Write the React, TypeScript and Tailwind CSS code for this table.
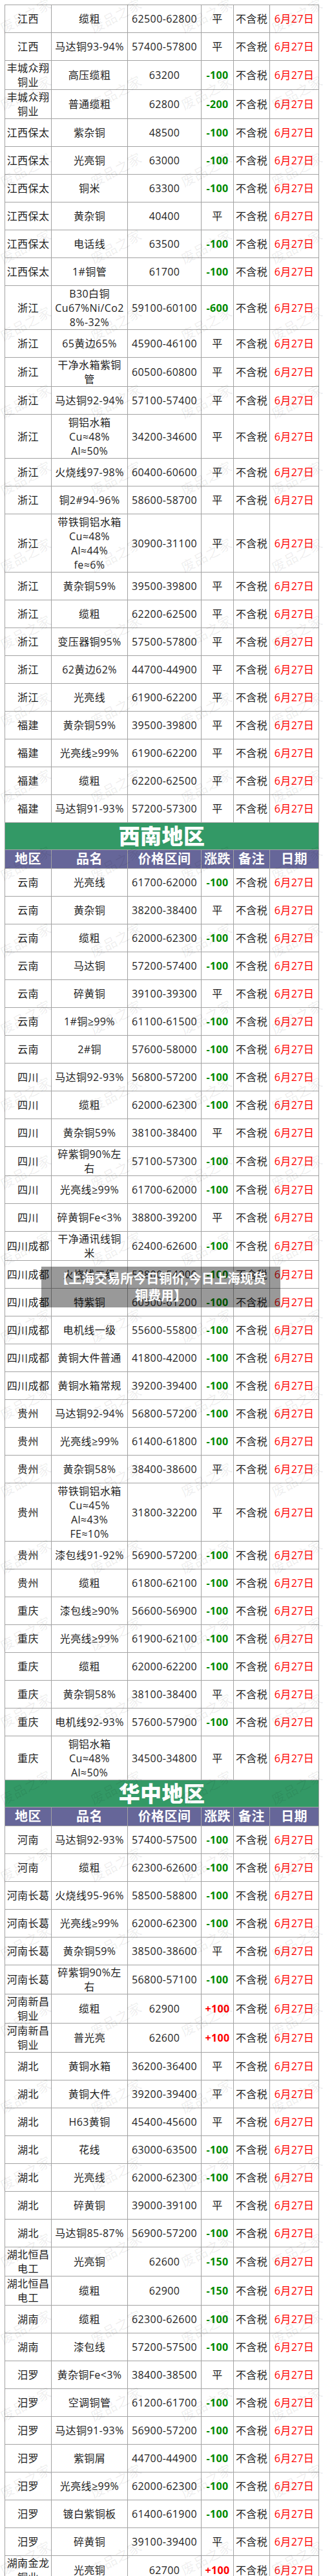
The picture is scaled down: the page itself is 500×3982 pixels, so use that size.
import React from 'react';

// [地区, 品名, 价格区间, 涨跌, 行高]
type Row = [string, string, string, string, number?];

const eastRows: Row[] = [
  ['江西', '缆粗', '62500-62800', '平'],
  ['江西', '马达铜93-94%', '57400-57800', '平'],
  ['丰城众翔\n铜业', '高压缆粗', '63200', '-100'],
  ['丰城众翔\n铜业', '普通缆粗', '62800', '-200'],
  ['江西保太', '紫杂铜', '48500', '-100'],
  ['江西保太', '光亮铜', '63000', '-100'],
  ['江西保太', '铜米', '63300', '-100'],
  ['江西保太', '黄杂铜', '40400', '平'],
  ['江西保太', '电话线', '63500', '-100'],
  ['江西保太', '1#铜管', '61700', '-100'],
  ['浙江', 'B30白铜\nCu67%Ni/Co2\n8%-32%', '59100-60100', '-600', 68],
  ['浙江', '65黄边65%', '45900-46100', '平'],
  ['浙江', '干净水箱紫铜\n管', '60500-60800', '平'],
  ['浙江', '马达铜92-94%', '57100-57400', '平'],
  ['浙江', '铜铝水箱\nCu≈48%\nAl≈50%', '34200-34600', '平', 68],
  ['浙江', '火烧线97-98%', '60400-60600', '平'],
  ['浙江', '铜2#94-96%', '58600-58700', '平'],
  ['浙江', '带铁铜铝水箱\nCu≈48%\nAl≈44%\nfe≈6%', '30900-31100', '平', 90],
  ['浙江', '黄杂铜59%', '39500-39800', '平'],
  ['浙江', '缆粗', '62200-62500', '平'],
  ['浙江', '变压器铜95%', '57500-57800', '平'],
  ['浙江', '62黄边62%', '44700-44900', '平'],
  ['浙江', '光亮线', '61900-62200', '平'],
  ['福建', '黄杂铜59%', '39500-39800', '平'],
  ['福建', '光亮线≥99%', '61900-62200', '平'],
  ['福建', '缆粗', '62200-62500', '平'],
  ['福建', '马达铜91-93%', '57200-57300', '平'],
];

const southwestRows: Row[] = [
  ['云南', '光亮线', '61700-62000', '-100'],
  ['云南', '黄杂铜', '38200-38400', '平'],
  ['云南', '缆粗', '62000-62300', '-100'],
  ['云南', '马达铜', '57200-57400', '-100'],
  ['云南', '碎黄铜', '39100-39300', '平'],
  ['云南', '1#铜≥99%', '61100-61500', '-100'],
  ['云南', '2#铜', '57600-58000', '-100'],
  ['四川', '马达铜92-93%', '56800-57200', '-100'],
  ['四川', '缆粗', '62000-62300', '-100'],
  ['四川', '黄杂铜59%', '38100-38400', '平'],
  ['四川', '碎紫铜90%左\n右', '57100-57300', '-100'],
  ['四川', '光亮线≥99%', '61700-62000', '-100'],
  ['四川', '碎黄铜Fe<3%', '38800-39200', '平'],
  ['四川成都', '干净通讯线铜\n米', '62400-62600', '-100'],
  ['四川成都', '火烧线二级', '53800-54000', '-100'],
  ['四川成都', '特紫铜', '60900-61200', '-100'],
  ['四川成都', '电机线一级', '55600-55800', '-100'],
  ['四川成都', '黄铜大件普通', '41800-42000', '-100'],
  ['四川成都', '黄铜水箱常规', '39200-39400', '-100'],
  ['贵州', '马达铜92-94%', '56800-57200', '-100'],
  ['贵州', '光亮线≥99%', '61400-61800', '-100'],
  ['贵州', '黄杂铜58%', '38400-38600', '平'],
  ['贵州', '带铁铜铝水箱\nCu≈45%\nAl≈43%\nFE≈10%', '31800-32200', '平', 90],
  ['贵州', '漆包线91-92%', '56900-57200', '-100'],
  ['贵州', '缆粗', '61800-62100', '-100'],
  ['重庆', '漆包线≥90%', '56600-56900', '-100'],
  ['重庆', '光亮线≥99%', '61900-62100', '-100'],
  ['重庆', '缆粗', '62000-62200', '-100'],
  ['重庆', '黄杂铜58%', '38100-38400', '平'],
  ['重庆', '电机线92-93%', '57600-57900', '-100'],
  ['重庆', '铜铝水箱\nCu≈48%\nAl≈50%', '34500-34800', '平', 68],
];

const centralRows: Row[] = [
  ['河南', '马达铜92-93%', '57400-57500', '-100'],
  ['河南', '缆粗', '62300-62600', '-100'],
  ['河南长葛', '火烧线95-96%', '58500-58800', '-100'],
  ['河南长葛', '光亮线≥99%', '62000-62300', '-100'],
  ['河南长葛', '黄杂铜59%', '38500-38600', '平'],
  ['河南长葛', '碎紫铜90%左\n右', '56800-57100', '-100'],
  ['河南新昌\n铜业', '缆粗', '62900', '+100'],
  ['河南新昌\n铜业', '普光亮', '62600', '+100'],
  ['湖北', '黄铜水箱', '36200-36400', '平'],
  ['湖北', '黄铜大件', '39200-39400', '平'],
  ['湖北', 'H63黄铜', '45400-45600', '平'],
  ['湖北', '花线', '63000-63500', '-100'],
  ['湖北', '光亮线', '62000-62300', '-100'],
  ['湖北', '碎黄铜', '39000-39100', '平'],
  ['湖北', '马达铜85-87%', '56900-57200', '-100'],
  ['湖北恒昌\n电工', '光亮铜', '62600', '-150'],
  ['湖北恒昌\n电工', '缆粗', '62900', '-150'],
  ['湖南', '缆粗', '62300-62600', '-100'],
  ['湖南', '漆包线', '57200-57500', '-100'],
  ['汨罗', '黄杂铜Fe<3%', '38400-38500', '平'],
  ['汨罗', '空调铜管', '61200-61700', '-100'],
  ['汨罗', '马达铜91-93%', '56900-57200', '-100'],
  ['汨罗', '紫铜屑', '44700-44900', '-100'],
  ['汨罗', '光亮线≥99%', '62000-62300', '-100'],
  ['汨罗', '镀白紫铜板', '61400-61900', '-100'],
  ['汨罗', '碎黄铜', '39100-39400', '平'],
  ['湖南金龙\n铜业', '光亮铜', '62700', '+100'],
];

const cell = 'border border-[#a3a3a3] p-0 text-center align-middle leading-[22px] whitespace-pre-line';

function changeClass(v: string) {
  if (v.startsWith('-')) return 'text-[#008a00] font-bold';
  if (v.startsWith('+')) return 'text-[#ff0000] font-bold';
  return '';
}

function DataRows({ rows }: { rows: Row[] }) {
  return (
    <>
      {rows.map((r, i) => (
        <tr key={i} style={{ height: r[4] ?? 43 }}>
          <td className={cell}>{r[0]}</td>
          <td className={cell}>{r[1]}</td>
          <td className={cell}>{r[2]}</td>
          <td className={`${cell} ${changeClass(r[3])}`}>{r[3]}</td>
          <td className={cell}>不含税</td>
          <td className={`${cell} text-[#ff0000]`}>6月27日</td>
        </tr>
      ))}
    </>
  );
}

function SectionHead({ title }: { title: string }) {
  return (
    <>
      <tr className="h-[42px]">
        <td colSpan={6} className="border border-[#a3a3a3] bg-[#339966] p-0 text-center align-middle text-[33px] leading-[40px] font-black text-white">
          {title}
        </td>
      </tr>
      <tr className="h-[29px]">
        {['地区', '品名', '价格区间', '涨跌', '备注', '日期'].map((h) => (
          <td key={h} className="border border-[#a3a3a3] bg-[#666699] p-0 text-center align-middle text-[20px] leading-[26px] font-bold text-white">
            {h}
          </td>
        ))}
      </tr>
    </>
  );
}

// faint diagonal "废品之家" watermark tiled over the whole image
function Watermarks() {
  const marks = [];
  for (let j = 0; j < 34; j++) {
    for (let i = 0; i < 4; i++) {
      marks.push(
        <span
          key={`${i}-${j}`}
          className="absolute -translate-x-1/2 -translate-y-1/2 -rotate-[28deg] whitespace-nowrap text-[21px] text-black/[0.08]"
          style={{ left: 40 + 140 * i, top: 25 + 119.1 * j }}
        >
          废品之家
        </span>
      );
    }
  }
  return <div className="pointer-events-none absolute inset-0 overflow-hidden">{marks}</div>;
}

export default function App() {
  return (
    <div className="relative h-[3982px] w-[500px] overflow-hidden bg-white pl-[7px] pt-[7px] font-['Open_Sans','Noto_Sans_CJK_SC',sans-serif] text-[16px] tracking-[0.4px] text-[#1e1e1e]">
      <table className="w-[486px] table-fixed border-collapse">
        <colgroup>
          <col className="w-[72px]" />
          <col className="w-[118px]" />
          <col className="w-[114px]" />
          <col className="w-[50px]" />
          <col className="w-[56px]" />
          <col className="w-[76px]" />
        </colgroup>
        <tbody>
          <DataRows rows={eastRows} />
          <SectionHead title="西南地区" />
          <DataRows rows={southwestRows} />
          <SectionHead title="华中地区" />
          <DataRows rows={centralRows} />
        </tbody>
      </table>

      <Watermarks />

      <div className="absolute left-[64px] top-[1958px] flex h-[63px] w-[370px] items-center justify-center bg-black/40 text-center text-[20px] font-bold leading-[26px] tracking-normal text-white">
        【上海交易所今日铜价,今日上海现货
        <br />
        铜费用】
      </div>
    </div>
  );
}
